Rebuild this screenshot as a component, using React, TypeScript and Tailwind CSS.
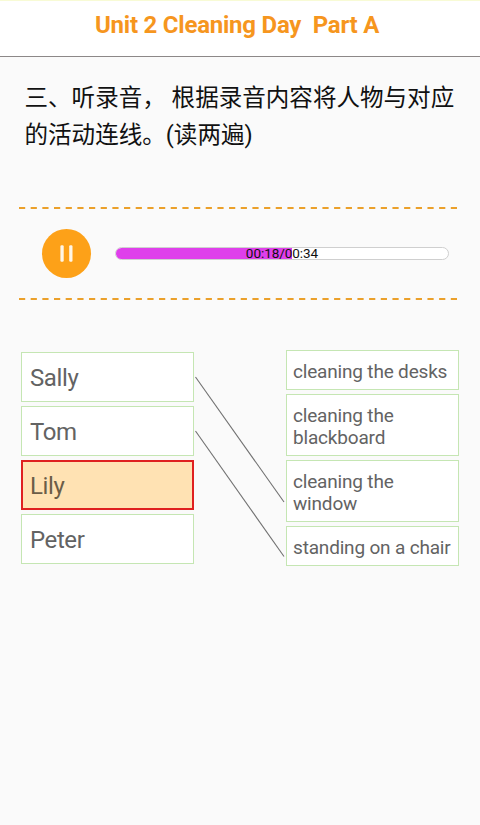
import React from 'react';

interface Choice {
  id: string;
  label: string;
}

const people: Choice[] = [
  { id: 'sally', label: 'Sally' },
  { id: 'tom', label: 'Tom' },
  { id: 'lily', label: 'Lily' },
  { id: 'peter', label: 'Peter' },
];

const activities: Choice[] = [
  { id: 'desks', label: 'cleaning the desks' },
  { id: 'blackboard', label: 'cleaning the blackboard' },
  { id: 'window', label: 'cleaning the window' },
  { id: 'chair', label: 'standing on a chair' },
];

const SELECTED = 'lily';

function DashedLine() {
  return (
    <svg className="block ml-[19px]" width="439" height="2" viewBox="0 0 439 2">
      <line x1="0" y1="1" x2="439" y2="1" stroke="#eba02a" strokeWidth="1.9" strokeDasharray="6.2 5.47" />
    </svg>
  );
}

function AudioPlayer({ elapsed, total, percent }: { elapsed: string; total: string; percent: number }) {
  return (
    <div className="flex h-[89px] items-center pl-[42px]">
      <button className="flex h-[49px] w-[49px] items-center justify-center rounded-full bg-[#fda118]">
        <svg className="block" width="49" height="49" viewBox="0 0 49 49" fill="#fff6e6">
          <rect x="18.4" y="16.2" width="3.3" height="16.6" rx="1.2" />
          <rect x="27.2" y="16.2" width="3.3" height="16.6" rx="1.2" />
        </svg>
      </button>
      <div className="relative ml-6 h-[13px] w-[334px]">
        <div className="h-full overflow-hidden rounded-full border border-[#cfcfcf] bg-white">
          <div className="h-full bg-[#df3feb]" style={{ width: `${percent}%` }} />
        </div>
        <span className="absolute -inset-y-1 inset-x-0 text-center text-[13.5px] leading-[21px] tracking-[-0.05px] text-[#111111]">
          {elapsed}/{total}
        </span>
      </div>
    </div>
  );
}

function PersonCard({ label, selected }: { label: string; selected: boolean }) {
  return (
    <button
      className={`flex h-[50px] items-center pt-[2px] text-left text-[24px] leading-7 tracking-[-0.4px] ${
        selected
          ? 'border-2 border-[#df2020] bg-[#ffe2b3] pl-[7px] text-[#6b5d47]'
          : 'border border-[#c5e6b3] bg-white pl-[8px] text-[#636363]'
      }`}
    >
      {label}
    </button>
  );
}

function ActivityCard({ label }: { label: string }) {
  return (
    <button className="border border-[#c5e6b3] bg-white pt-[10px] pr-1 pb-[6px] pl-[6px] text-left text-[19px] leading-[22px] tracking-[-0.18px] text-[#636363]">
      {label}
    </button>
  );
}

export default function App() {
  return (
    <div className="min-h-[825px] w-[480px] bg-[#fafafa] font-[Roboto,'Noto_Sans_CJK_SC',sans-serif]">
      <header className="h-[57px] border-t border-b border-t-[#f8fbd5] border-b-[#8c8888] bg-white pt-[10px] pl-[95px]">
        <h1 className="whitespace-pre text-[24px] leading-7 font-bold tracking-[-0.23px] text-[#f6961e]">
          {'Unit 2 Cleaning Day  Part A'}
        </h1>
      </header>

      <p className="mt-[23px] h-[127px] whitespace-pre pl-[24.5px] text-[23.55px] leading-[37px] text-[#111111]">
        {'三、听录音， 根据录音内容将人物与对应\n的活动连线。(读两遍)'}
      </p>

      <section>
        <DashedLine />
        <AudioPlayer elapsed="00:18" total="00:34" percent={53} />
        <DashedLine />
      </section>

      <main className="mt-[50px] flex pl-[21px]">
        <div className="flex w-[173px] flex-col gap-1 pt-[2px]">
          {people.map((person) => (
            <PersonCard key={person.id} label={person.label} selected={person.id === SELECTED} />
          ))}
        </div>

        {/* connections already drawn by the student */}
        <svg className="block shrink-0" width="92" height="216" viewBox="0 0 92 216">
          <g stroke="#707070" strokeWidth="1.1">
            <line x1="1.5" y1="27" x2="90" y2="152" />
            <line x1="1.5" y1="81" x2="90" y2="206.5" />
          </g>
        </svg>

        <div className="flex w-[173px] flex-col gap-1">
          {activities.map((activity) => (
            <ActivityCard key={activity.id} label={activity.label} />
          ))}
        </div>
      </main>
    </div>
  );
}
